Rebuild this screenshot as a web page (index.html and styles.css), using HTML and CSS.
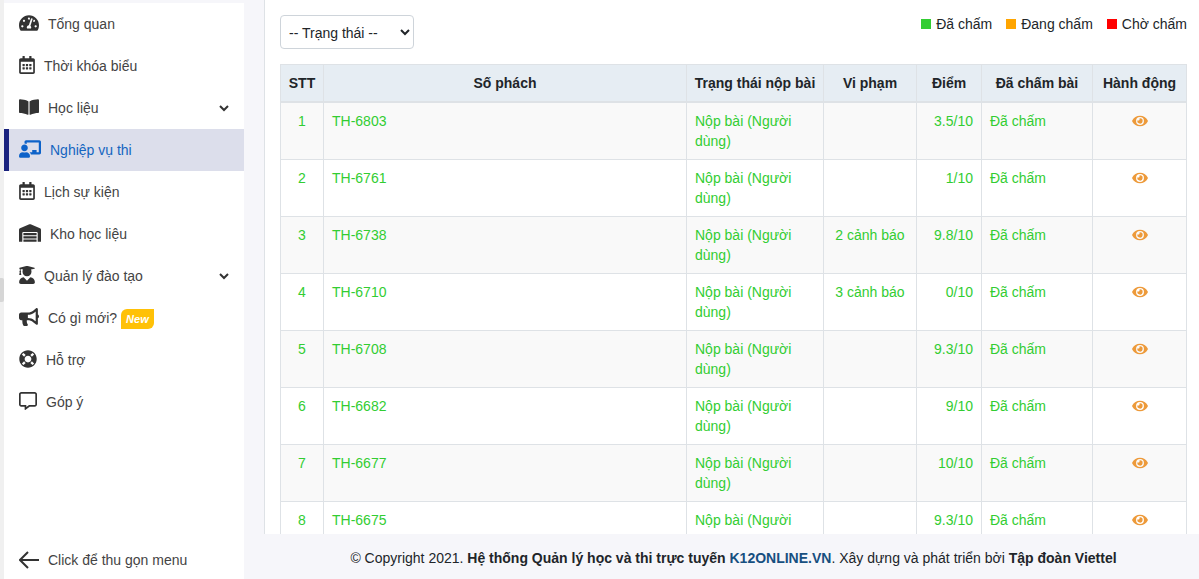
FILE: index.html
```html
<!DOCTYPE html>
<html lang="vi">
<head>
  <meta charset="UTF-8">
  <meta name="viewport" content="width=device-width, initial-scale=1.0">
  <title>K12Online - Nghiệp vụ thi</title>
  <link rel="stylesheet" href="styles.css">
</head>
<body>
  <!-- Shared icons -->
  <svg class="sprite" aria-hidden="true">
    <symbol id="calendar" viewBox="0 0 448 512"><path d="M148 288h-40c-6.600 0-12-5.400-12-12v-40c0-6.600 5.400-12 12-12h40c6.600 0 12 5.400 12 12v40c0 6.600-5.400 12-12 12zm108-12v-40c0-6.600-5.400-12-12-12h-40c-6.600 0-12 5.400-12 12v40c0 6.600 5.400 12 12 12h40c6.600 0 12-5.400 12-12zm96 0v-40c0-6.600-5.400-12-12-12h-40c-6.600 0-12 5.400-12 12v40c0 6.600 5.400 12 12 12h40c6.600 0 12-5.400 12-12zm-96 96v-40c0-6.600-5.400-12-12-12h-40c-6.600 0-12 5.400-12 12v40c0 6.600 5.400 12 12 12h40c6.600 0 12-5.400 12-12zm-96 0v-40c0-6.600-5.400-12-12-12h-40c-6.600 0-12 5.400-12 12v40c0 6.600 5.400 12 12 12h40c6.600 0 12-5.400 12-12zm192 0v-40c0-6.600-5.400-12-12-12h-40c-6.600 0-12 5.400-12 12v40c0 6.600 5.400 12 12 12h40c6.600 0 12-5.400 12-12zm96-260v352c0 26.500-21.500 48-48 48H48c-26.500 0-48-21.500-48-48V112c0-26.500 21.500-48 48-48h48V12c0-6.600 5.400-12 12-12h40c6.600 0 12 5.400 12 12v52h128V12c0-6.600 5.400-12 12-12h40c6.600 0 12 5.400 12 12v52h48c26.500 0 48 21.500 48 48zm-48 346V160H48v298c0 3.300 2.700 6 6 6h340c3.300 0 6-2.700 6-6z"/></symbol>
    <symbol id="chevron" viewBox="0 0 10 10"><path d="M1 3l4 4 4-4" fill="none" stroke="currentColor" stroke-width="2"/></symbol>
    <symbol id="eye" viewBox="0 0 576 512"><path d="M572.520 241.400C518.290 135.590 410.930 64 288 64S57.680 135.640 3.480 241.410a32.350 32.350 0 0 0 0 29.190C57.710 376.410 165.070 448 288 448s230.320-71.640 284.520-177.410a32.350 32.350 0 0 0 0-29.190zM288 400a144 144 0 1 1 144-144 143.930 143.930 0 0 1-144 144zm0-240a95.310 95.310 0 0 0-25.310 3.790 47.850 47.850 0 0 1-66.900 66.900A95.780 95.780 0 1 0 288 160z"/></symbol>
  </svg>

  <div class="layout">
    <div class="page-edge"><span class="edge-handle"></span></div>

    <!-- Sidebar -->
    <aside class="sidebar">
      <nav class="menu">
        <a class="menu-item" href="#">
          <svg class="icon icon-wide" viewBox="0 0 576 512"><path d="M288 32C128.940 32 0 160.940 0 320c0 52.800 14.250 102.260 39.060 144.800 5.610 9.620 16.300 15.200 27.440 15.200h443c11.140 0 21.830-5.580 27.440-15.200C561.750 422.260 576 372.800 576 320c0-159.060-128.940-288-288-288zm0 64c14.710 0 26.580 10.130 30.320 23.650-1.110 2.260-2.640 4.230-3.450 6.670l-9.220 27.670c-5.130 3.490-10.970 6.010-17.640 6.010-17.670 0-32-14.330-32-32S270.330 96 288 96zM96 384c-17.670 0-32-14.330-32-32s14.330-32 32-32 32 14.330 32 32-14.330 32-32 32zm48-160c-17.670 0-32-14.330-32-32s14.330-32 32-32 32 14.330 32 32-14.330 32-32 32zm246.770-72.410l-61.330 184C343.130 347.330 352 364.540 352 384c0 11.720-3.380 22.550-8.880 32H232.880c-5.500-9.450-8.880-20.280-8.880-32 0-33.940 26.500-61.430 59.900-63.590l61.340-184.010c4.170-12.560 17.730-19.450 30.360-15.170 12.570 4.190 19.350 17.790 15.170 30.360zm14.660 57.200l15.520-46.550c3.470-1.290 7.130-2.230 11.050-2.230 17.670 0 32 14.330 32 32s-14.330 32-32 32c-11.380-.010-20.890-6.280-26.570-15.220zM480 384c-17.670 0-32-14.330-32-32s14.330-32 32-32 32 14.330 32 32-14.330 32-32 32z"/></svg>
          Tổng quan
        </a>
        <a class="menu-item" href="#">
          <svg class="icon icon-narrow"><use href="#calendar"/></svg>
          Thời khóa biểu
        </a>
        <a class="menu-item" href="#">
          <svg class="icon icon-wide" viewBox="0 0 576 512"><path d="M542.220 32.050c-54.800 3.110-163.720 14.430-230.960 55.590-4.640 2.840-7.270 7.890-7.270 13.170v363.870c0 11.550 12.630 18.850 23.280 13.490 69.180-34.820 169.230-44.320 218.700-46.920 16.890-.890 30.020-14.430 30.020-30.660V62.750c.010-17.710-15.350-31.740-33.770-30.700zM264.730 87.640C197.500 46.480 88.580 35.170 33.780 32.050 15.360 31.010 0 45.040 0 62.750V400.600c0 16.240 13.130 29.780 30.020 30.660 49.490 2.600 149.590 12.110 218.770 46.950 10.620 5.350 23.210-1.940 23.210-13.460V100.630c0-5.290-2.620-10.140-7.270-12.990z"/></svg>
          Học liệu
          <svg class="chevron"><use href="#chevron"/></svg>
        </a>
        <a class="menu-item active" href="#">
          <svg class="icon icon-wider" viewBox="0 0 640 512"><path d="M208 352c-2.390 0-4.780.350-7.060 1.090C187.980 357.300 174.350 360 160 360c-14.350 0-27.980-2.700-40.950-6.910-2.280-.740-4.660-1.090-7.050-1.090C49.940 352-.330 402.480 0 464.620.140 490.880 21.730 512 48 512h224c26.270 0 47.860-21.120 48-47.380.330-62.140-49.940-112.620-112-112.620zm-48-32c53.020 0 96-42.980 96-96s-42.980-96-96-96-96 42.980-96 96 42.980 96 96 96zM592 0H208c-26.470 0-48 22.250-48 49.590V96c23.420 0 45.100 6.780 64 17.800V64h352v288h-64v-64H384v64h-76.240c19.100 16.690 33.120 38.730 39.690 64H592c26.470 0 48-22.250 48-49.590V49.590C640 22.250 618.470 0 592 0z"/></svg>
          Nghiệp vụ thi
        </a>
        <a class="menu-item" href="#">
          <svg class="icon icon-narrow"><use href="#calendar"/></svg>
          Lịch sự kiện
        </a>
        <a class="menu-item" href="#">
          <svg class="icon icon-wider" viewBox="0 0 640 512"><path d="M504 352H136.400c-4.400 0-8 3.600-8 8l-.1 48c0 4.400 3.600 8 8 8H504c4.400 0 8-3.600 8-8v-48c0-4.400-3.600-8-8-8zm0 96H136.100c-4.400 0-8 3.600-8 8l-.1 48c0 4.400 3.600 8 8 8h368c4.400 0 8-3.600 8-8v-48c0-4.400-3.600-8-8-8zm0-192H136.600c-4.400 0-8 3.600-8 8l-.1 48c0 4.400 3.600 8 8 8H504c4.400 0 8-3.600 8-8v-48c0-4.400-3.600-8-8-8zm106.500-139L338.400 3.700a48.150 48.150 0 0 0-36.900 0L29.500 117C11.700 124.500 0 141.900 0 161.300V504c0 4.400 3.600 8 8 8h80c4.400 0 8-3.600 8-8V256c0-17.600 14.600-32 32.600-32h382.800c18 0 32.600 14.400 32.600 32v248c0 4.400 3.600 8 8 8h80c4.400 0 8-3.600 8-8V161.300c0-19.400-11.700-36.800-29.500-44.300z"/></svg>
          Kho học liệu
        </a>
        <a class="menu-item" href="#">
          <svg class="icon icon-narrow" viewBox="0 0 448 512"><path d="M319.400 320.600L224 416l-95.400-95.400C57.100 323.700 0 382.200 0 454.400v9.600c0 26.500 21.500 48 48 48h352c26.500 0 48-21.500 48-48v-9.600c0-72.200-57.100-130.700-128.600-133.800zM13.600 79.800l6.400 1.500v58.400c-7 4.200-12 11.500-12 20.300 0 8.400 4.600 15.400 11.100 19.700L3.500 242c-1.700 6.900 2.100 14 7.600 14h41.800c5.500 0 9.300-7.100 7.600-14l-15.600-62.300C51.400 175.400 56 168.400 56 160c0-8.800-5-16.100-12-20.300V87.100l66 15.900c-8.600 17.200-14 36.400-14 57 0 70.700 57.300 128 128 128s128-57.300 128-128c0-20.600-5.300-39.800-14-57l96.300-23.200c18.200-4.400 18.200-27.100 0-31.500l-190.400-46c-13-3.100-26.700-3.100-39.700 0L13.600 48.200c-18.100 4.400-18.100 27.200 0 31.600z"/></svg>
          Quản lý đào tạo
          <svg class="chevron"><use href="#chevron"/></svg>
        </a>
        <a class="menu-item" href="#">
          <svg class="icon icon-wide" viewBox="0 0 576 512"><path d="M576 240c0-23.630-12.950-44.040-32-55.120V32.010C544 23.260 537.020 0 512 0c-7.120 0-14.190 2.380-19.980 7.020l-85.030 68.030C364.280 109.190 310.660 128 256 128H64c-35.350 0-64 28.650-64 64v96c0 35.350 28.650 64 64 64h33.700c-1.390 10.480-2.180 21.140-2.180 32 0 39.770 9.260 77.350 25.560 110.940 5.190 10.690 16.520 17.060 28.400 17.060h74.280c26.050 0 41.690-29.840 25.900-50.560-16.400-21.520-26.150-48.360-26.150-77.440 0-11.110 1.620-21.790 4.410-32H256c54.660 0 108.280 18.810 150.980 52.950l85.030 68.030a32.020 32.020 0 0 0 19.980 7.020c24.920 0 32-22.780 32-32V295.130C563.050 284.040 576 263.630 576 240zm-96 141.420l-33.050-26.440C392.950 311.780 325.120 288 256 288v-96c69.120 0 136.950-23.780 190.950-66.980L480 98.580v282.840z"/></svg>
          Có gì mới?
          <span class="badge-new">New</span>
        </a>
        <a class="menu-item" href="#">
          <svg class="icon" viewBox="0 0 512 512"><path d="M256 8C119.033 8 8 119.033 8 256s111.033 248 248 248 248-111.033 248-248S392.967 8 256 8zm173.696 119.559l-63.399 63.399c-10.987-18.559-26.670-34.252-45.255-45.255l63.399-63.399a218.396 218.396 0 0 1 45.255 45.255zM256 352c-53.019 0-96-42.981-96-96s42.981-96 96-96 96 42.981 96 96-42.981 96-96 96zM127.559 82.304l63.399 63.399c-18.559 10.987-34.252 26.670-45.255 45.255l-63.399-63.399a218.372 218.372 0 0 1 45.255-45.255zM82.304 384.441l63.399-63.399c10.987 18.559 26.670 34.252 45.255 45.255l-63.399 63.399a218.396 218.396 0 0 1-45.255-45.255zm302.137 45.255l-63.399-63.399c18.559-10.987 34.252-26.670 45.255-45.255l63.399 63.399a218.403 218.403 0 0 1-45.255 45.255z"/></svg>
          Hỗ trợ
        </a>
        <a class="menu-item" href="#">
          <svg class="icon" viewBox="0 0 512 512"><path d="M448 0H64C28.700 0 0 28.700 0 64v288c0 35.300 28.700 64 64 64h96v84c0 7.100 5.800 12 12 12 2.400 0 4.900-.7 7.100-2.400L304 416h144c35.300 0 64-28.700 64-64V64c0-35.300-28.700-64-64-64zm16 352c0 8.800-7.200 16-16 16H288l-12.800 9.600L208 428v-60H64c-8.800 0-16-7.200-16-16V64c0-8.800 7.200-16 16-16h384c8.800 0 16 7.200 16 16v288z"/></svg>
          Góp ý
        </a>
      </nav>
      <button class="collapse-button" type="button">
        <svg class="icon icon-wide" viewBox="0 0 20 18"><path d="M20 9H1M9 1L1 9l8 8" fill="none" stroke="currentColor" stroke-width="2"/></svg>
        Click để thu gọn menu
      </button>
    </aside>

    <!-- Content -->
    <div class="content">
      <main class="panel">
        <div class="toolbar">
          <select class="status-select" aria-label="Trạng thái">
            <option>-- Trạng thái --</option>
            <option>Đã chấm</option>
            <option>Đang chấm</option>
            <option>Chờ chấm</option>
          </select>
          <div class="legend">
            <span class="legend-item"><span class="square green"></span>Đã chấm</span>
            <span class="legend-item"><span class="square orange"></span>Đang chấm</span>
            <span class="legend-item"><span class="square red"></span>Chờ chấm</span>
          </div>
        </div>

        <table class="exam-table">
          <colgroup>
            <col class="col-index">
            <col>
            <col class="col-submit">
            <col class="col-warning">
            <col class="col-score">
            <col class="col-marked">
            <col class="col-action">
          </colgroup>
          <thead>
            <tr>
              <th>STT</th>
              <th>Số phách</th>
              <th>Trạng thái nộp bài</th>
              <th>Vi phạm</th>
              <th>Điểm</th>
              <th>Đã chấm bài</th>
              <th>Hành động</th>
            </tr>
          </thead>
          <tbody>
            <tr>
              <td class="center">1</td>
              <td>TH-6803</td>
              <td>Nộp bài (Người dùng)</td>
              <td class="center"></td>
              <td class="right">3.5/10</td>
              <td>Đã chấm</td>
              <td class="center"><a class="view" href="#" aria-label="Xem TH-6803"><svg class="eye"><use href="#eye"/></svg></a></td>
            </tr>
            <tr>
              <td class="center">2</td>
              <td>TH-6761</td>
              <td>Nộp bài (Người dùng)</td>
              <td class="center"></td>
              <td class="right">1/10</td>
              <td>Đã chấm</td>
              <td class="center"><a class="view" href="#" aria-label="Xem TH-6761"><svg class="eye"><use href="#eye"/></svg></a></td>
            </tr>
            <tr>
              <td class="center">3</td>
              <td>TH-6738</td>
              <td>Nộp bài (Người dùng)</td>
              <td class="center">2 cảnh báo</td>
              <td class="right">9.8/10</td>
              <td>Đã chấm</td>
              <td class="center"><a class="view" href="#" aria-label="Xem TH-6738"><svg class="eye"><use href="#eye"/></svg></a></td>
            </tr>
            <tr>
              <td class="center">4</td>
              <td>TH-6710</td>
              <td>Nộp bài (Người dùng)</td>
              <td class="center">3 cảnh báo</td>
              <td class="right">0/10</td>
              <td>Đã chấm</td>
              <td class="center"><a class="view" href="#" aria-label="Xem TH-6710"><svg class="eye"><use href="#eye"/></svg></a></td>
            </tr>
            <tr>
              <td class="center">5</td>
              <td>TH-6708</td>
              <td>Nộp bài (Người dùng)</td>
              <td class="center"></td>
              <td class="right">9.3/10</td>
              <td>Đã chấm</td>
              <td class="center"><a class="view" href="#" aria-label="Xem TH-6708"><svg class="eye"><use href="#eye"/></svg></a></td>
            </tr>
            <tr>
              <td class="center">6</td>
              <td>TH-6682</td>
              <td>Nộp bài (Người dùng)</td>
              <td class="center"></td>
              <td class="right">9/10</td>
              <td>Đã chấm</td>
              <td class="center"><a class="view" href="#" aria-label="Xem TH-6682"><svg class="eye"><use href="#eye"/></svg></a></td>
            </tr>
            <tr>
              <td class="center">7</td>
              <td>TH-6677</td>
              <td>Nộp bài (Người dùng)</td>
              <td class="center"></td>
              <td class="right">10/10</td>
              <td>Đã chấm</td>
              <td class="center"><a class="view" href="#" aria-label="Xem TH-6677"><svg class="eye"><use href="#eye"/></svg></a></td>
            </tr>
            <tr>
              <td class="center">8</td>
              <td>TH-6675</td>
              <td>Nộp bài (Người dùng)</td>
              <td class="center"></td>
              <td class="right">9.3/10</td>
              <td>Đã chấm</td>
              <td class="center"><a class="view" href="#" aria-label="Xem TH-6675"><svg class="eye"><use href="#eye"/></svg></a></td>
            </tr>
          </tbody>
        </table>
      </main>

      <footer class="footer">
        © Copyright 2021. <b>Hệ thống Quản lý học và thi trực tuyến <a href="#">K12ONLINE.VN</a></b>. Xây dựng và phát triển bởi <b>Tập đoàn Viettel</b>
      </footer>
    </div>
  </div>
</body>
</html>
```
FILE: styles.css
```css
* {
  box-sizing: border-box;
}

body {
  margin: 0;
  background: #f6f6fa;
  font-family: "Liberation Sans", Arial, sans-serif;
  font-size: 14px;
  line-height: 20px;
  color: #212529;
}

a {
  text-decoration: none;
}

.sprite {
  display: none;
}

.layout {
  display: flex;
  height: 100vh;
}

/* Sidebar */
.page-edge {
  display: flex;
  align-items: center;
  width: 4px;
  background: #f0f0f0;
}

.edge-handle {
  width: 4px;
  height: 24px;
  background: #d6d6d6;
  border-radius: 0 2px 2px 0;
}

.sidebar {
  display: flex;
  flex-direction: column;
  flex: none;
  width: 240px;
  background: #fff;
  border-top: 3px solid #f6f6fa;
}

.menu {
  flex: 1;
  min-height: 0;
  overflow: hidden;
}

.menu-item, .collapse-button {
  display: flex;
  align-items: center;
  gap: 9px;
  width: 100%;
  height: 42px;
  padding: 0 15px 0 10px;
  border: 0;
  border-left: 5px solid transparent;
  background: none;
  color: #444;
  font: inherit;
}

.collapse-button {
  height: 38px;
  cursor: pointer;
}

.menu-item:hover {
  background: #f0f0f6;
}

.menu-item.active {
  background: #dcdeeb;
  border-left-color: #1a237e;
  color: #1565c0;
}

.icon {
  flex: none;
  width: 18px;
  height: 18px;
  margin-bottom: 3px;
  fill: #333;
}

.active .icon {
  fill: #0d62c9;
}

.collapse-button .icon {
  margin-bottom: 0;
  color: #333;
}

.icon-narrow {
  width: 16px;
}

.icon-wide {
  width: 20px;
}

.icon-wider {
  width: 22px;
}

.chevron {
  width: 10px;
  height: 10px;
  margin-left: auto;
  color: #333;
}

.badge-new {
  margin: 2px 0 0 -5px;
  padding: 0 5px;
  background: #ffc107;
  border-radius: 6px 0;
  color: #fff;
  font-size: 11px;
  font-weight: bold;
  font-style: italic;
}

/* Content */
.content {
  display: flex;
  flex-direction: column;
  flex: 1;
  min-width: 0;
  padding-left: 20px;
}

.panel {
  flex: 1;
  min-height: 0;
  overflow: hidden;
  padding: 15px 12px 0 15px;
  background: #fff;
  border-left: 1px solid #dee2e6;
}

.toolbar {
  display: flex;
  justify-content: space-between;
  align-items: flex-start;
  margin-bottom: 15px;
}

.status-select {
  width: 134px;
  height: 34px;
  padding: 2px 2px 0 4px;
  background: #fff;
  border: 1px solid #ced4da;
  border-radius: 4px;
  color: #212529;
  font: inherit;
}

.legend {
  display: flex;
  gap: 14px;
}

.legend-item {
  display: flex;
  align-items: center;
  gap: 5px;
  line-height: 18px;
}

.square {
  width: 10px;
  height: 10px;
}

.green {
  background: #32cd32;
}

.orange {
  background: #ffa500;
}

.red {
  background: #f00;
}

.exam-table {
  width: 100%;
  table-layout: fixed;
  border-collapse: collapse;
}

.exam-table th, .exam-table td {
  padding: 8px;
  border: 1px solid #dee2e6;
}

.exam-table th {
  padding: 8px 4px;
  background: #e6edf3;
  border-bottom-width: 2px;
}

.exam-table td {
  color: #32cd32;
  vertical-align: top;
}

.exam-table tbody tr:nth-child(odd) {
  background: #f9f9f9;
}

.exam-table .center {
  text-align: center;
}

.exam-table .right {
  text-align: right;
}

.col-index {
  width: 43px;
}

.col-submit {
  width: 137px;
}

.col-warning {
  width: 93px;
}

.col-score {
  width: 65px;
}

.col-marked {
  width: 111px;
}

.col-action {
  width: 94px;
}

.view {
  display: flex;
  justify-content: center;
  align-items: center;
  height: 20px;
}

.eye {
  width: 16px;
  height: 14px;
  fill: #ed9a3a;
}

.footer {
  padding: 14px 0 11px 4px;
  text-align: center;
}

.footer a {
  color: #174f80;
}
```
